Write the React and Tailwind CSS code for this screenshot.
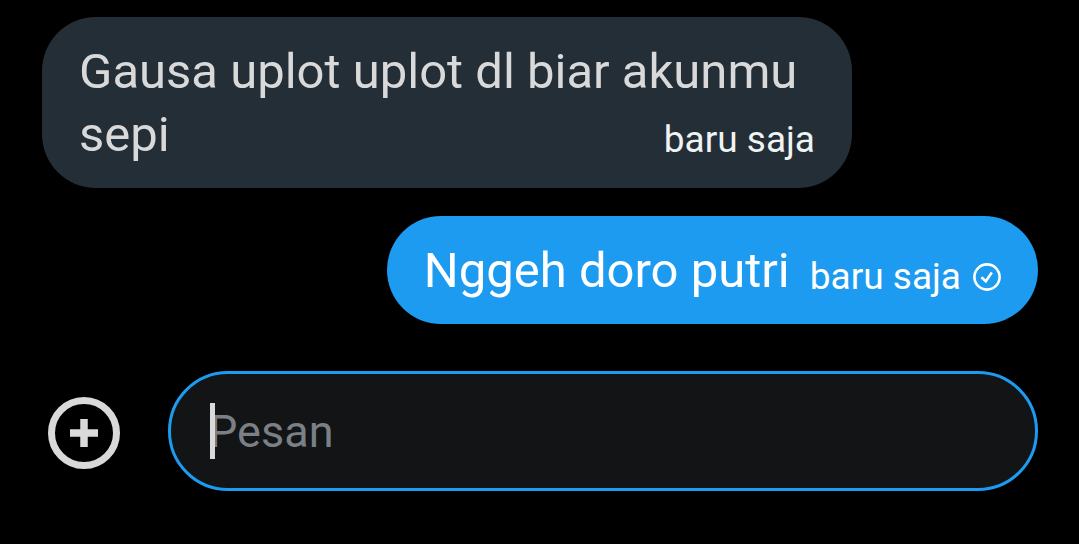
const messages = [
  { id: 1, text: 'Gausa uplot uplot dl biar akunmu sepi', time: 'baru saja', mine: false },
  { id: 2, text: 'Nggeh doro putri', time: 'baru saja', mine: true },
];

const SentIcon = () => (
  <svg viewBox="0 0 28 28" className="h-7 w-7 shrink-0" fill="none" stroke="currentColor" strokeWidth="2.6" aria-hidden="true">
    <circle cx="14" cy="14" r="12.6" />
    <path d="M8.4 14.2l4.4 4 6-8.6" />
  </svg>
);

const AddIcon = () => (
  <svg viewBox="0 0 72 72" className="h-18 w-18" fill="none" stroke="currentColor" aria-hidden="true">
    <circle cx="36" cy="36" r="32.5" strokeWidth="7" />
    <path d="M36 22v28M22 36h28" strokeWidth="7.5" />
  </svg>
);

// The time floats to the right of the last line of the message
const ReceivedMessage = ({ message }) => (
  <li className="w-[810px] max-w-full rounded-[54px] bg-[#242e36] px-[37px] pt-[23px] pb-[22px] text-[#d9d9d9]">
    <span className="text-[49px] leading-[63px]">{message.text}</span>
    <time className="float-right mt-3 text-[37px] leading-[50px] text-[#eff3f4]">{message.time}</time>
  </li>
);

const SentMessage = ({ message }) => (
  <li className="flex max-w-full items-center self-end rounded-[54px] bg-[#1d9bf0] px-[37px] pt-[23px] pb-[22px] text-white">
    <p className="text-[49px] leading-[63px]">{message.text}</p>
    <div className="ml-5 flex items-center gap-3 pt-3">
      <time className="text-[37px] leading-[50px]">{message.time}</time>
      <SentIcon />
    </div>
  </li>
);

const App = () => {
  return (
    <main className="min-h-screen bg-black pt-[17px] pr-[41px] pl-[42px] font-[Roboto,sans-serif]">
      <ul className="flex flex-col items-start gap-7">
        {messages.map((message) =>
          message.mine ? (
            <SentMessage key={message.id} message={message} />
          ) : (
            <ReceivedMessage key={message.id} message={message} />
          )
        )}
      </ul>

      {/* Composer */}
      <form className="mt-[47px] flex items-center pl-[6px]" onSubmit={(e) => e.preventDefault()}>
        <button type="button" aria-label="Tambah" className="mr-12 pt-1 text-[#d9d9d9]">
          <AddIcon />
        </button>
        <div className="relative flex-1">
          <input
            type="text"
            aria-label="Pesan"
            placeholder="Pesan"
            className="h-[120px] w-full rounded-full border-3 border-[#1d9bf0] bg-[#121415] px-[38px] text-[45px] text-[#d9d9d9] placeholder-[#7b8087] outline-none"
          />
          <span className="absolute top-8 left-[42px] h-14 w-[5px] bg-[#d9d9d9]" />
        </div>
      </form>
    </main>
  );
};

export default App;
